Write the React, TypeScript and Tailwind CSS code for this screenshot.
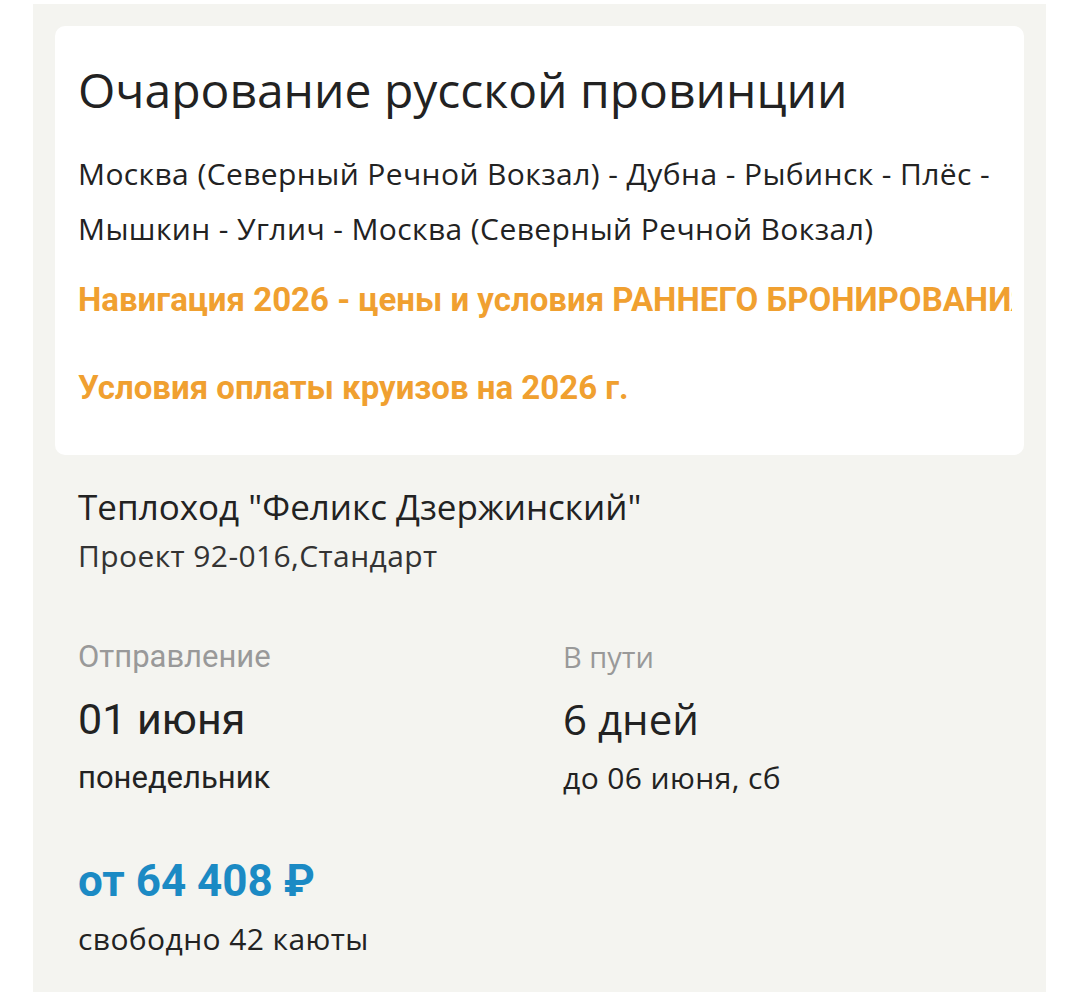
import React from 'react';

const App: React.FC = () => {
  return (
    <div className="min-h-screen bg-white pl-[33px] pt-[4px] font-['Open_Sans',sans-serif] text-[#222]">
      <div className="w-[1013px] min-h-[988px] bg-[#f4f4f0] px-[22px] pt-[22px]">
        {/* cruise card */}
        <div className="rounded-[10px] bg-white pl-[23px] pr-[12px] pt-[32px] pb-[45px]">
          <h1 className="text-[48px] leading-[64px] font-normal">Очарование русской провинции</h1>
          <p className="mt-[24px] text-[30px] leading-[55px] tracking-[0.4px]">
            Москва (Северный Речной Вокзал) - Дубна - Рыбинск - Плёс - Мышкин - Углич - Москва (Северный Речной Вокзал)
          </p>
          <div className="mt-[22px] font-['Roboto',sans-serif] font-bold text-[#f0a030] text-[33px]">
            <div className="overflow-hidden whitespace-nowrap leading-[44px]">Навигация 2026 - цены и условия РАННЕГО БРОНИРОВАНИЯ</div>
            <div className="mt-[44px] leading-[44px]">Условия оплаты круизов на 2026 г.</div>
          </div>
        </div>

        {/* ship and dates */}
        <div className="pl-[23px] pt-[29px]">
          <div className="text-[35px] leading-[46px]">Теплоход "Феликс Дзержинский"</div>
          <div className="text-[30px] leading-[52px] tracking-[0.4px] text-[#333]">Проект 92-016,Стандарт</div>

          <div className="mt-[55px] grid grid-cols-[485px_1fr]">
            <div className="font-['Roboto',sans-serif]">
              <div className="text-[31px] leading-[40px] text-[#999]">Отправление</div>
              <div className="mt-[14px] text-[43px] leading-[56px]">01 июня</div>
              <div className="mt-[11px] text-[31px] leading-[40px]">понедельник</div>
            </div>
            <div>
              <div className="text-[29px] leading-[40px] text-[#999]">В пути</div>
              <div className="mt-[14px] text-[42px] leading-[56px]">6 дней</div>
              <div className="mt-[11px] text-[30px] leading-[40px] tracking-[0.4px]">до 06 июня, сб</div>
            </div>
          </div>

          <div className="mt-[55px] font-['Roboto',sans-serif] font-bold text-[44px] leading-[56px] text-[#1b8ac4]">от 64 408 ₽</div>
          <div className="mt-[5px] text-[30px] leading-[50px] tracking-[0.4px]">свободно 42 каюты</div>
        </div>
      </div>
    </div>
  );
};

export default App;
